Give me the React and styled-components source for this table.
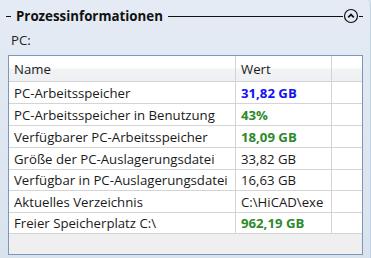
import React from "react";
import styled, { createGlobalStyle } from "styled-components";

const Global = createGlobalStyle`
  html, body { margin: 0; padding: 0; }
  body {
    width: 371px; height: 258px; overflow: hidden;
    font-family: "Open Sans", "Noto Sans", sans-serif;
    background: #dde6f0;
  }
`;

const Panel = styled.div`
  box-sizing: border-box;
  width: 371px;
  height: 258px;
  padding: 5px 7px 3px 8px;
  background: linear-gradient(#e4ebf4, #d9e3ee);
  border-right: 1px solid #c3d0df;
  border-top-right-radius: 4px;
  display: flex;
  flex-direction: column;
`;

const Header = styled.div`
  display: flex;
  align-items: center;
  height: 22px;
  margin-left: -2px;
`;

const Dash = styled.span`
  width: 5px;
  height: 1px;
  background: #111;
  margin-right: 5px;
`;

const Title = styled.span`
  font-weight: 700;
  font-size: 13.3px;
  color: #111;
`;

const Rule = styled.span`
  flex: 1;
  height: 1px;
  background: #111;
  margin-left: 5px;
`;

const Tail = styled.span`
  width: 4px;
  height: 1px;
  background: #111;
`;

const CollapseBtn = styled.svg`
  width: 16px;
  height: 16px;
  display: block;
`;

const Label = styled.div`
  font-size: 13.2px;
  color: #222;
  padding: 4px 0 0 3px;
  height: 28px;
  box-sizing: border-box;
`;

const Grid = styled.div`
  box-sizing: border-box;
  border: 1px solid #7d97b8;
  background: #efefef;
  height: 200px;
  display: flex;
  flex-direction: column;
`;

const Row = styled.div`
  display: grid;
  grid-template-columns: 227px 96px 1fr;
  box-sizing: border-box;
  height: ${(p) => p.$h}px;
  flex: none;
  border-bottom: 1px solid #d4d4d4;
  background: ${(p) =>
    p.$head ? "linear-gradient(#ffffff 0%, #ffffff 45%, #f1f2f4 55%, #eef0f3 100%)" : "#ffffff"};
`;

const Cell = styled.div`
  display: flex;
  align-items: center;
  padding-left: 5px;
  font-size: 13.2px;
  white-space: nowrap;
  overflow: hidden;
  border-right: 1px solid #d4d4d4;
  color: ${(p) => p.$color || "#1a1a1a"};
  font-weight: ${(p) => (p.$bold ? 700 : 400)};
  &:last-child { border-right: none; }
`;

const rows = [
  ["PC-Arbeitsspeicher", "31,82 GB", "#1212f5", true, 22],
  ["PC-Arbeitsspeicher in Benutzung", "43%", "#2d8a2a", true, 22],
  ["Verfügbarer PC-Arbeitsspeicher", "18,09 GB", "#2d8a2a", true, 22],
  ["Größe der PC-Auslagerungsdatei", "33,82 GB", null, false, 22],
  ["Verfügbar in PC-Auslagerungsdatei", "16,63 GB", null, false, 21],
  ["Aktuelles Verzeichnis", "C:\\HiCAD\\exe", null, false, 22],
  ["Freier Speicherplatz C:\\", "962,19 GB", "#2d8a2a", true, 21],
];

export default function App() {
  return (
    <>
      <Global />
      <Panel>
        <Header>
          <Dash />
          <Title>Prozessinformationen</Title>
          <Rule />
          <CollapseBtn viewBox="0 0 16 16">
            <circle cx="8" cy="8" r="6.5" fill="none" stroke="#111" strokeWidth="1.2" />
            <path d="M5.2 9.4 L8 6.6 L10.8 9.4" fill="none" stroke="#111" strokeWidth="1.8" />
          </CollapseBtn>
          <Tail />
        </Header>
        <Label>PC:</Label>
        <Grid>
          <Row $head $h={26}>
            <Cell>Name</Cell>
            <Cell>Wert</Cell>
            <Cell />
          </Row>
          {rows.map(([n, v, c, b, h], i) => (
            <Row key={i} $h={h}>
              <Cell>{n}</Cell>
              <Cell $color={c || undefined} $bold={b}>{v}</Cell>
              <Cell />
            </Row>
          ))}
        </Grid>
      </Panel>
    </>
  );
}
